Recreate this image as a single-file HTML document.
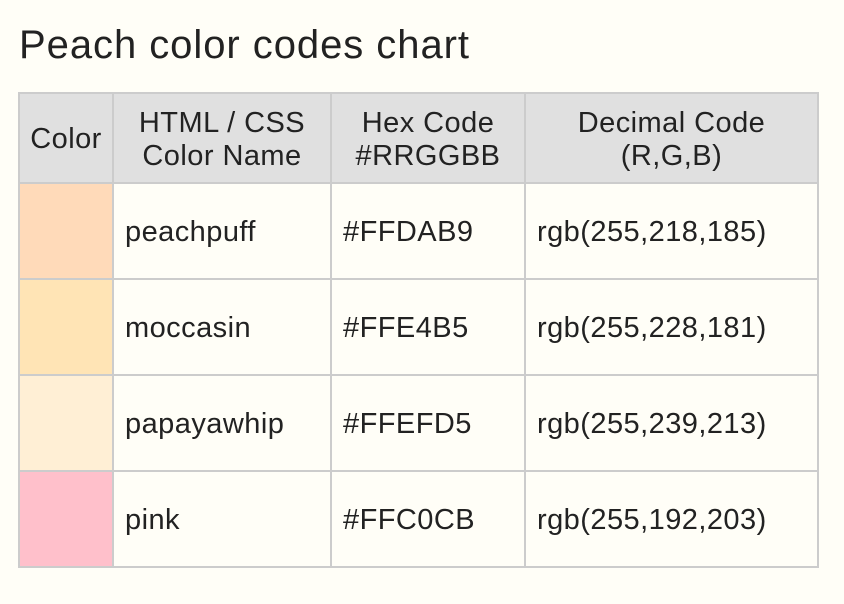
<!DOCTYPE html>
<html><head><style>
body{margin:0;width:844px;height:604px;background:#FFFEF7;font-family:"Liberation Sans",Arial,sans-serif;color:#222;position:relative;overflow:hidden}
h1{position:absolute;left:19px;top:23px;margin:0;font-size:40px;letter-spacing:0.95px;font-weight:normal;line-height:44px}
table{position:absolute;left:18px;top:92px;border-collapse:collapse;border:2px solid #ccc}
td,th{border:2px solid #ccc;font-size:29px;letter-spacing:0.45px;font-weight:normal;padding:3px 9px 0 11px;text-align:left;line-height:33px}
th{background:#e0e0e0;text-align:center;height:85px;padding:3px 10px 0}
td{height:91px}
</style></head><body>
<h1>Peach color codes chart</h1>
<table>
<tr><th style="width:74px;padding:3px 9px 0">Color</th><th style="width:196px">HTML / CSS<br>Color Name</th><th style="width:172px">Hex Code<br>#RRGGBB</th><th style="width:271px">Decimal Code<br>(R,G,B)</th></tr>
<tr><td style="background:#FFDAB9;padding:0 9px"></td><td>peachpuff</td><td>#FFDAB9</td><td>rgb(255,218,185)</td></tr>
<tr><td style="background:#FFE4B5;padding:0 9px"></td><td>moccasin</td><td>#FFE4B5</td><td>rgb(255,228,181)</td></tr>
<tr><td style="background:#FFEFD5;padding:0 9px"></td><td>papayawhip</td><td>#FFEFD5</td><td>rgb(255,239,213)</td></tr>
<tr><td style="background:#FFC0CB;padding:0 9px"></td><td>pink</td><td>#FFC0CB</td><td>rgb(255,192,203)</td></tr>
</table>
</body></html>
